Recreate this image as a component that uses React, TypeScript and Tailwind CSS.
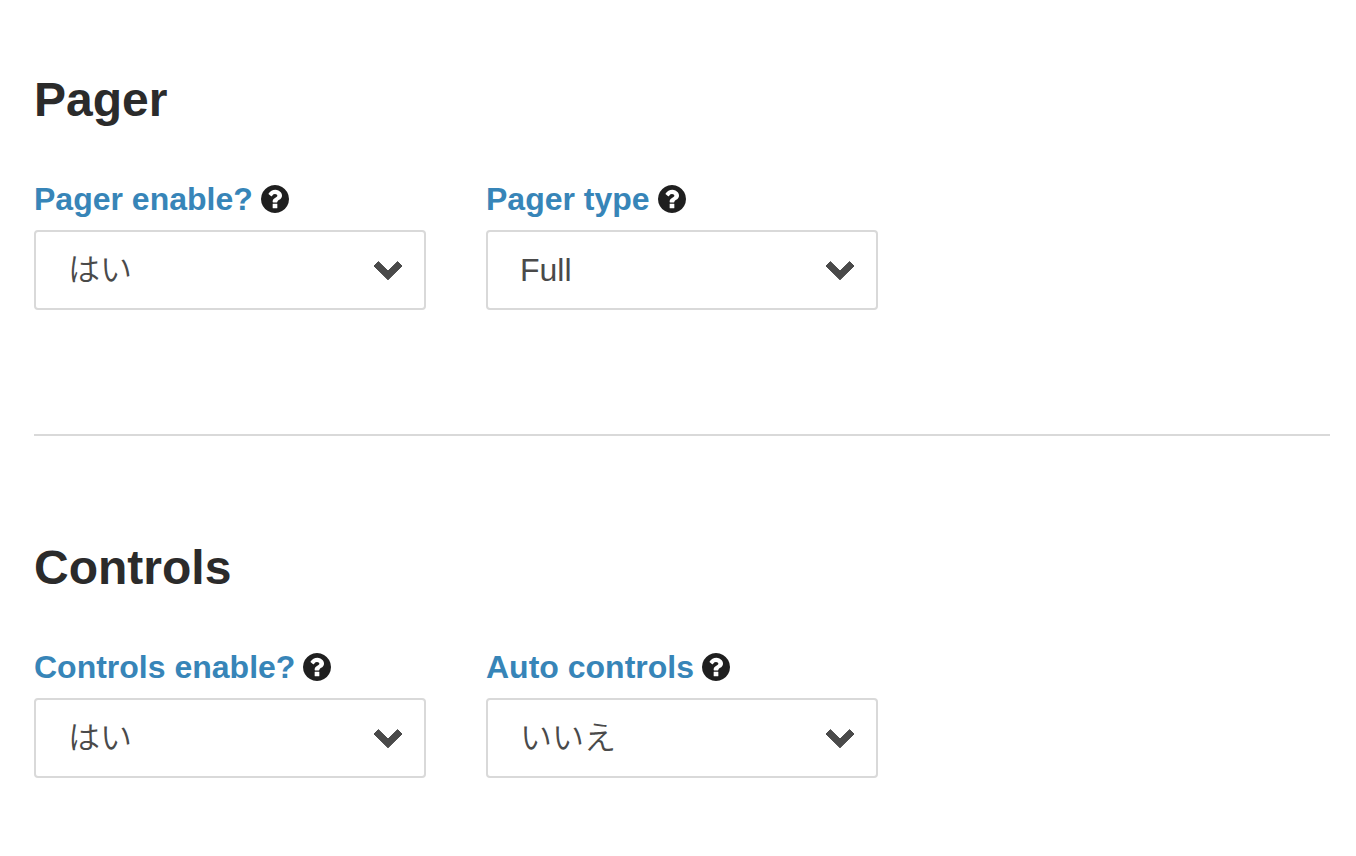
import React, { useId, useState } from 'react';

type Field = {
  label: string;
  help: string;
  options: string[];
};

type Section = {
  title: string;
  fields: Field[];
};

const sections: Section[] = [
  {
    title: 'Pager',
    fields: [
      { label: 'Pager enable?', help: 'Pager enable', options: ['はい', 'いいえ'] },
      { label: 'Pager type', help: 'Pager type', options: ['Full', 'Short'] },
    ],
  },
  {
    title: 'Controls',
    fields: [
      { label: 'Controls enable?', help: 'Controls enable', options: ['はい', 'いいえ'] },
      { label: 'Auto controls', help: 'Auto controls', options: ['いいえ', 'はい'] },
    ],
  },
];

const HelpIcon: React.FC = () => (
  <svg viewBox="0 0 1536 1536" className="size-7" fill="currentColor" aria-hidden="true">
    <path d="M896 1248v-192q0-14-9-23t-23-9h-192q-14 0-23 9t-9 23v192q0 14 9 23t23 9h192q14 0 23-9t9-23zM1152 576q0-88-55.5-163t-138.5-116-170-41q-243 0-371 213-15 24 8 42l132 100q7 6 19 6 16 0 25-12 53-68 86-92 34-24 86-24 48 0 85.5 26t37.5 59q0 38-20 61t-68 45q-63 28-115.5 86.5t-52.5 125.5v36q0 14 9 23t23 9h192q14 0 23-9t9-23q0-19 21.5-49.5t54.5-49.5q32-18 49-28.5t46-35 44.5-48 28-60.5 12.5-81zM1536 768q0 209-103 385.5t-279.5 279.5-385.5 103-385.5-103-279.5-279.5-103-385.5 103-385.5 279.5-279.5 385.5-103 385.5 103 279.5 279.5 103 385.5z" />
  </svg>
);

const SelectField: React.FC<{ field: Field }> = ({ field }) => {
  const id = useId();
  const [value, setValue] = useState(field.options[0]);

  return (
    <div className="w-full max-w-[392px]">
      <div className="flex h-10 items-center gap-2">
        <label htmlFor={id} className="text-[32px] leading-10 font-bold whitespace-nowrap text-[#3785b8]">
          {field.label}
        </label>
        <button type="button" aria-label={field.help} className="text-[#1f1f1f]">
          <HelpIcon />
        </button>
      </div>
      <div className="relative mt-[11px]">
        <select
          id={id}
          value={value}
          onChange={(e) => setValue(e.target.value)}
          className="h-20 w-full appearance-none rounded-sm border-2 border-[#d9d9d9] bg-white pr-16 pl-8 text-[32px] font-[350] text-[#4a4a4a]"
        >
          {field.options.map((option) => (
            <option key={option}>{option}</option>
          ))}
        </select>
        <svg
          viewBox="0 0 30 20"
          className="pointer-events-none absolute top-[30px] right-[23px] h-5 w-[30px] text-[#4a4a4a]"
          fill="currentColor"
          stroke="currentColor"
          strokeLinejoin="round"
          aria-hidden="true"
        >
          <path d="M5.4 1.6 15 11l9.6-9.4 4.4 4.4L15 19.8 1 6z" />
        </svg>
      </div>
    </div>
  );
};

const App: React.FC = () => {
  return (
    <main className="bg-white pr-[26px] pl-[34px] font-['Liberation_Sans','Noto_Sans_CJK_JP',sans-serif]">
      {sections.map((section) => (
        <section key={section.title} className="border-b-2 border-[#d9d9d9] pt-[70px] pb-[124px] last:border-b-0 last:pt-[102px] last:pb-16">
          <h2 className="text-[48px] leading-[60px] font-bold text-[#2b2b2b]">{section.title}</h2>
          <div className="mt-[49px] flex gap-[60px]">
            {section.fields.map((field) => (
              <SelectField key={field.label} field={field} />
            ))}
          </div>
        </section>
      ))}
    </main>
  );
};

export default App;
